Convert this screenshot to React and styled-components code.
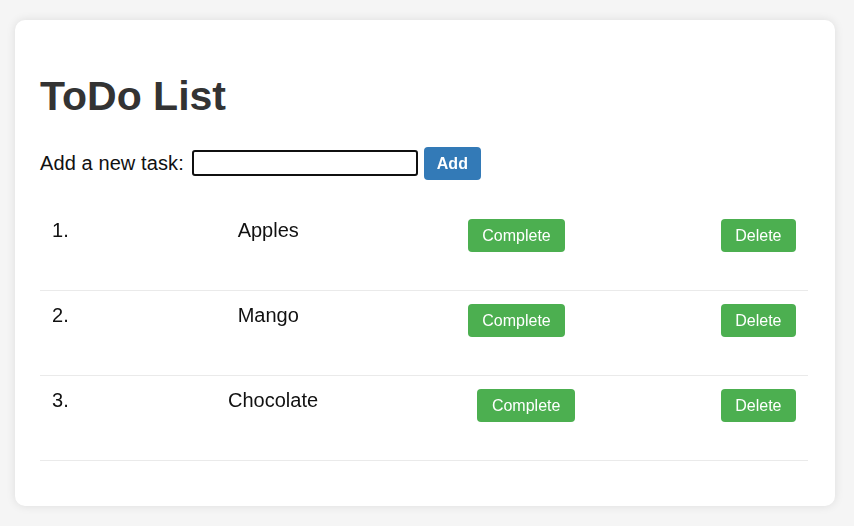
import React, { useState } from 'react';
import styled, { createGlobalStyle } from 'styled-components';

const GlobalStyle = createGlobalStyle`
  html, body {
    margin: 0;
    padding: 0;
    background: #f5f5f5;
  }
  body {
    font-family: 'Liberation Sans', Arial, sans-serif;
    color: #111;
  }
`;

const Page = styled.div`
  padding: 20px 19px 20px 15px;
`;

const Card = styled.div`
  background: #fff;
  border-radius: 10px;
  box-shadow: 0 0 10px rgba(0, 0, 0, 0.1);
  padding: 27px 27px 25px 25px;
`;

const Title = styled.h1`
  font-size: 41px;
  font-weight: bold;
  color: #333;
  margin: 26px 0 27px;
  line-height: 46px;
`;

const Form = styled.form`
  display: flex;
  align-items: center;
  font-size: 20px;
  height: 34px;
`;

const Label = styled.label`
  margin-right: 8px;
  color: #111;
  letter-spacing: 0.1px;
`;

const Input = styled.input`
  width: 226px;
  height: 26px;
  box-sizing: border-box;
  border: 2px solid #101010;
  border-radius: 3px;
  outline: none;
  padding: 0 2px;
  font-size: 15px;
  font-family: 'Liberation Sans', Arial, sans-serif;
  margin-right: 6px;
`;

const Button = styled.button`
  background: ${(props) => props.background};
  color: #fff;
  border: none;
  border-radius: 4px;
  font-family: 'Liberation Sans', Arial, sans-serif;
  font-size: 16px;
  font-weight: ${(props) => (props.bold ? 'bold' : 'normal')};
  line-height: 19px;
  padding: 7px ${(props) => props.padX || '14.5px'};
  cursor: pointer;
`;

const List = styled.ul`
  list-style: none;
  margin: 26px 0 20px;
  padding: 0;
`;

const Row = styled.li`
  display: flex;
  justify-content: space-between;
  align-items: flex-start;
  height: 85px;
  box-sizing: border-box;
  padding: 13px 12px 0;
  border-bottom: 1px solid #eaeaea;
  font-size: 20px;
  line-height: 23px;
`;

const Num = styled.span`
  color: #111;
`;

const Name = styled.span`
  margin: 0 13.5px;
  color: #111;
  text-decoration: ${(props) => (props.done ? 'line-through' : 'none')};
`;

const initialTasks = [
  { id: 1, text: 'Apples', done: false },
  { id: 2, text: 'Mango', done: false },
  { id: 3, text: 'Chocolate', done: false },
];

const App = () => {
  const [tasks, setTasks] = useState(initialTasks);
  const [value, setValue] = useState('');

  const handleAdd = (e) => {
    e.preventDefault();
    if (!value.trim()) return;
    setTasks([...tasks, { id: Date.now(), text: value, done: false }]);
    setValue('');
  };

  const toggle = (id) =>
    setTasks(tasks.map((t) => (t.id === id ? { ...t, done: !t.done } : t)));

  const remove = (id) => setTasks(tasks.filter((t) => t.id !== id));

  return (
    <Page>
      <GlobalStyle />
      <Card>
        <Title>ToDo List</Title>
        <Form onSubmit={handleAdd}>
          <Label htmlFor="task">Add a new task:</Label>
          <Input
            id="task"
            autoFocus
            value={value}
            onChange={(e) => setValue(e.target.value)}
          />
          <Button type="submit" background="#337ab7" bold padX="13px">
            Add
          </Button>
        </Form>
        <List>
          {tasks.map((task, i) => (
            <Row key={task.id}>
              <Num>{i + 1}.</Num>
              <Name done={task.done}>{task.text}</Name>
              <Button background="#4caf50" onClick={() => toggle(task.id)}>
                Complete
              </Button>
              <Button background="#4caf50" onClick={() => remove(task.id)}>
                Delete
              </Button>
            </Row>
          ))}
        </List>
      </Card>
    </Page>
  );
};

export default App;
